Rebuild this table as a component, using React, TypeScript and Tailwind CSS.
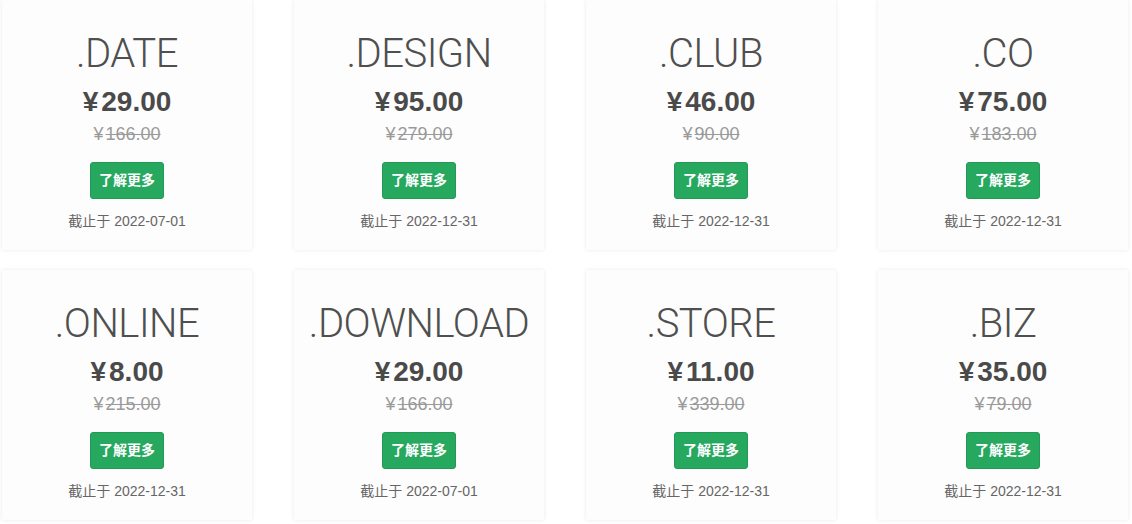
import React from "react";

const items = [
  { tld: ".DATE", price: "29.00", old: "166.00", date: "2022-07-01" },
  { tld: ".DESIGN", price: "95.00", old: "279.00", date: "2022-12-31" },
  { tld: ".CLUB", price: "46.00", old: "90.00", date: "2022-12-31" },
  { tld: ".CO", price: "75.00", old: "183.00", date: "2022-12-31" },
  { tld: ".ONLINE", price: "8.00", old: "215.00", date: "2022-12-31" },
  { tld: ".DOWNLOAD", price: "29.00", old: "166.00", date: "2022-07-01" },
  { tld: ".STORE", price: "11.00", old: "339.00", date: "2022-12-31" },
  { tld: ".BIZ", price: "35.00", old: "79.00", date: "2022-12-31" },
];

export default function App() {
  return (
    <div
      className="w-[1132px] h-[524px] bg-white overflow-hidden pl-[2px]"
      style={{ fontFamily: '"Liberation Sans", Arial, "Noto Sans CJK SC", sans-serif' }}
    >
      <div className="grid grid-cols-[repeat(4,250px)] gap-x-[42px] gap-y-[20px]">
        {items.map((it) => (
          <div
            key={it.tld}
            className="h-[250px] bg-[#fdfdfd] shadow-[0_0_4px_rgba(0,0,0,0.09)] flex flex-col items-center pt-[31px]"
          >
            <div
              className="text-[40px] leading-[46px] font-light text-[#4f4f4f] tracking-[-0.5px]"
              style={{ fontFamily: 'Roboto, "Liberation Sans", sans-serif' }}
            >
              {it.tld}
            </div>
            <div className="mt-[9px] text-[28px] leading-[32px] font-bold text-[#4a4a4a]">
              <span className="mr-[3px]">¥</span>
              {it.price}
            </div>
            <div className="mt-[4px] text-[18px] leading-[24px] text-[#9a9a9a]">
              <span className="mr-[2px]">¥</span>
              <span className="line-through">{it.old}</span>
            </div>
            <button className="mt-[16px] h-[37px] w-[74px] rounded-[3px] bg-[#27a85f] border border-[#229955] text-white text-[14px] font-bold flex items-center justify-center">
              了解更多
            </button>
            <div className="mt-[12px] text-[14px] leading-[20px] text-[#666666]">
              截止于 {it.date}
            </div>
          </div>
        ))}
      </div>
    </div>
  );
}
